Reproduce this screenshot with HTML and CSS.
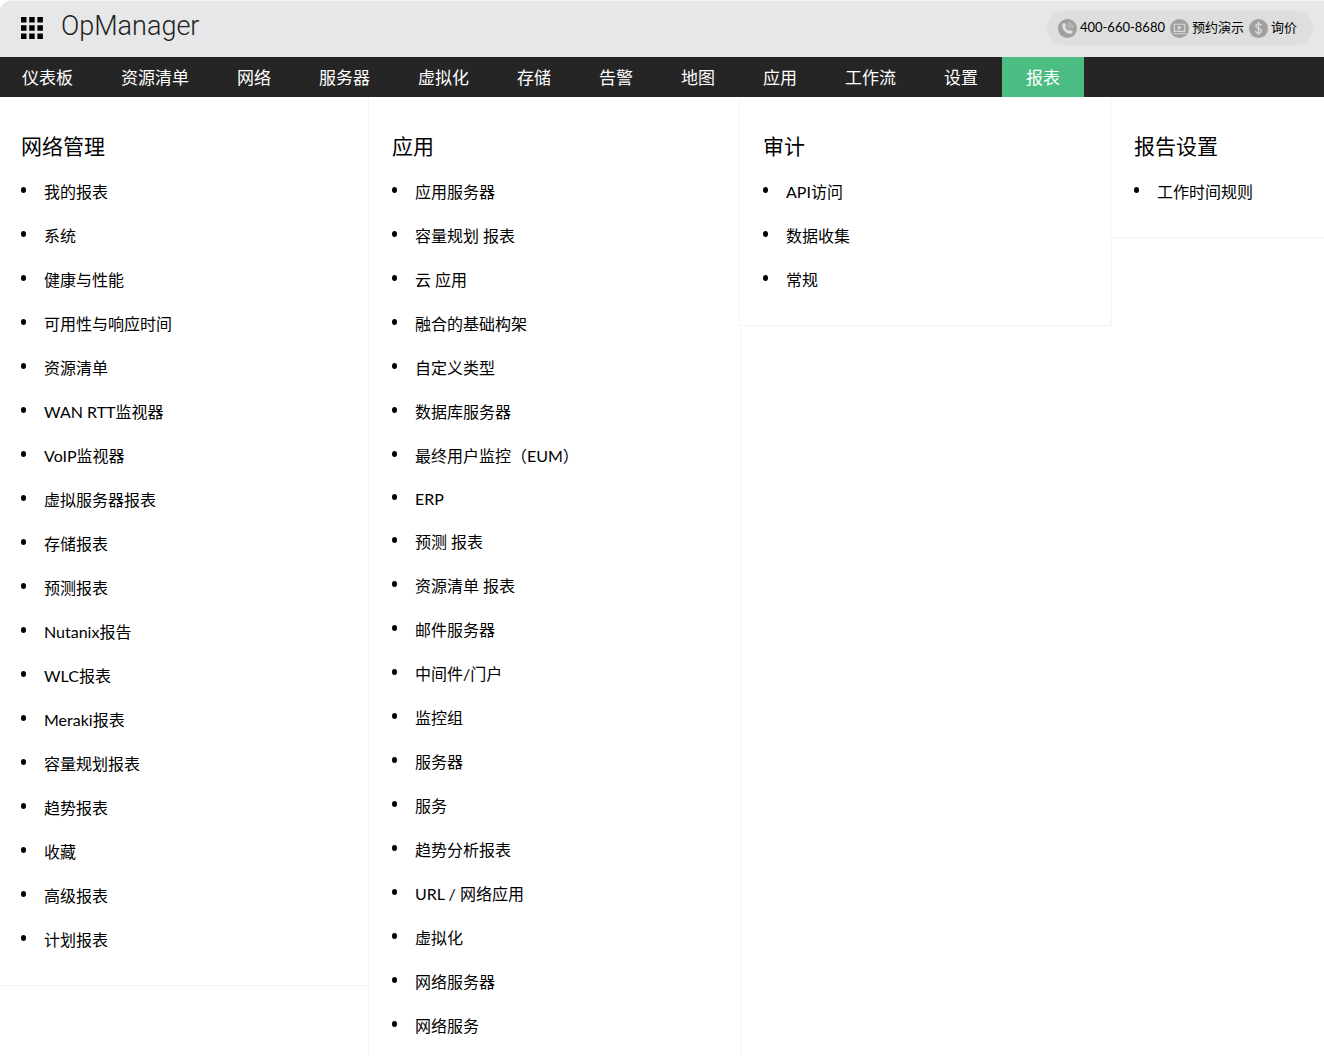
FILE: index.html
```html
<!DOCTYPE html>
<html lang="zh-CN">
<head>
  <meta charset="UTF-8">
  <title>OpManager</title>
  <meta name="viewport" content="width=device-width, initial-scale=1.0">
  <link rel="stylesheet" href="styles.css">
</head>
<body>
  <header class="topbar">
    <div class="brand">
      <button class="apps" aria-label="Apps">
        <svg width="22" height="22" viewBox="0 0 22 22">
          <path d="M0 0h5.500v5.500H0zM8.200 0h5.500v5.500H8.200zM16.400 0h5.500v5.500h-5.500zM0 8.200h5.500v5.500H0zM8.200 8.200h5.500v5.500H8.200zM16.400 8.200h5.500v5.500h-5.500zM0 16.400h5.500v5.500H0zM8.200 16.400h5.500v5.500H8.200zM16.400 16.400h5.500v5.500h-5.500z"/>
        </svg>
      </button>
      <a class="logo" href="#">OpManager</a>
    </div>
    <div class="contact">
      <a href="#">
        <svg width="19" height="19" viewBox="0 0 20 20">
          <circle cx="10" cy="10" r="10" fill="#a0a0a0"/>
          <path d="M4.500 5.200L6.600 4l2.200 2.800-1.200 1.400c.6 1.700 2 3.200 3.900 4.100l1.500-1.100 2.800 2.200-1.300 2C9.500 16.800 3 10.500 4.500 5.200z" fill="#dedede"/>
          <path d="M10.300 7.600a2 2 0 0 1 1.900 2M10.400 5.800a4 4 0 0 1 3.600 3.800M10.500 4a5.600 5.600 0 0 1 5.200 5.500" fill="none" stroke="#d0d0d0" stroke-width=".9"/>
        </svg>
        <span>400-660-8680</span>
      </a>
      <a href="#">
        <svg width="19" height="19" viewBox="0 0 20 20">
          <circle cx="10" cy="10" r="10" fill="#a0a0a0"/>
          <path d="M4.500 5.500h11v7.500h-11zM3.500 15.500h13" fill="none" stroke="#d8d8d8" stroke-width="1.200"/>
          <path d="M8.300 6.900l4 2.400-4 2.400z" fill="#dedede"/>
        </svg>
        <span>预约演示</span>
      </a>
      <a href="#">
        <svg width="19" height="19" viewBox="0 0 20 20">
          <circle cx="10" cy="10" r="10" fill="#a0a0a0"/>
          <path d="M13 7c-.3-1.300-1.400-1.900-3-1.900S7.200 5.900 7.200 7.300c0 3.200 5.800 1.800 5.800 5 0 1.600-1.300 2.400-3 2.400s-3-.8-3.200-2.200M10 3v14" fill="none" stroke="#dedede" stroke-width="1.400"/>
        </svg>
        <span>询价</span>
      </a>
    </div>
  </header>

  <nav class="menu">
    <a href="#">仪表板</a>
    <a href="#">资源清单</a>
    <a href="#">网络</a>
    <a href="#">服务器</a>
    <a href="#">虚拟化</a>
    <a href="#">存储</a>
    <a href="#">告警</a>
    <a href="#">地图</a>
    <a href="#">应用</a>
    <a href="#">工作流</a>
    <a href="#">设置</a>
    <a href="#" class="active">报表</a>
  </nav>

  <main class="columns">
    <section class="column">
      <h2>网络管理</h2>
      <ul>
        <li><a href="#">我的报表</a></li>
        <li><a href="#">系统</a></li>
        <li><a href="#">健康与性能</a></li>
        <li><a href="#">可用性与响应时间</a></li>
        <li><a href="#">资源清单</a></li>
        <li><a href="#">WAN RTT监视器</a></li>
        <li><a href="#">VoIP监视器</a></li>
        <li><a href="#">虚拟服务器报表</a></li>
        <li><a href="#">存储报表</a></li>
        <li><a href="#">预测报表</a></li>
        <li><a href="#">Nutanix报告</a></li>
        <li><a href="#">WLC报表</a></li>
        <li><a href="#">Meraki报表</a></li>
        <li><a href="#">容量规划报表</a></li>
        <li><a href="#">趋势报表</a></li>
        <li><a href="#">收藏</a></li>
        <li><a href="#">高级报表</a></li>
        <li><a href="#">计划报表</a></li>
      </ul>
    </section>

    <section class="column">
      <h2>应用</h2>
      <ul>
        <li><a href="#">应用服务器</a></li>
        <li><a href="#">容量规划 报表</a></li>
        <li><a href="#">云 应用</a></li>
        <li><a href="#">融合的基础构架</a></li>
        <li><a href="#">自定义类型</a></li>
        <li><a href="#">数据库服务器</a></li>
        <li><a href="#">最终用户监控（EUM）</a></li>
        <li class="latin"><a href="#">ERP</a></li>
        <li><a href="#">预测 报表</a></li>
        <li><a href="#">资源清单 报表</a></li>
        <li><a href="#">邮件服务器</a></li>
        <li><a href="#">中间件/门户</a></li>
        <li><a href="#">监控组</a></li>
        <li><a href="#">服务器</a></li>
        <li><a href="#">服务</a></li>
        <li><a href="#">趋势分析报表</a></li>
        <li><a href="#">URL / 网络应用</a></li>
        <li><a href="#">虚拟化</a></li>
        <li><a href="#">网络服务器</a></li>
        <li><a href="#">网络服务</a></li>
      </ul>
    </section>

    <section class="column">
      <h2>审计</h2>
      <ul>
        <li><a href="#">API访问</a></li>
        <li><a href="#">数据收集</a></li>
        <li><a href="#">常规</a></li>
      </ul>
    </section>

    <section class="column">
      <h2>报告设置</h2>
      <ul>
        <li><a href="#">工作时间规则</a></li>
      </ul>
    </section>
  </main>
</body>
</html>
```
FILE: styles.css
```css
* {
  box-sizing: border-box;
}
body {
  margin: 0;
  background: #fff;
  color: #000;
  font-family: Lato, "Noto Sans CJK SC", sans-serif;
  font-size: 16px;
  overflow: hidden;
}
a {
  color: inherit;
  text-decoration: none;
}

/* top bar */
.topbar {
  display: flex;
  justify-content: space-between;
  align-items: center;
  height: 57px;
  padding: 0 11px 2px 21px;
  background: #e6e7e8;
  border-top: 1px solid #f3f3f3;
  border-radius: 12px 0 0 0;
}
.brand {
  display: flex;
  align-items: center;
  gap: 18px;
}
.apps {
  display: flex;
  padding: 0;
  border: none;
  background: none;
  cursor: pointer;
}
.logo {
  font-family: "Roboto Slab", Roboto, sans-serif;
  font-size: 27px;
  font-weight: 300;
  line-height: 32px;
  padding-bottom: 4px;
  color: #222;
}
.contact {
  display: flex;
  align-items: center;
  gap: 5px;
  height: 34px;
  padding: 0 16px 0 11px;
  border-radius: 17px;
  background: #dedede;
  font-size: 13px;
}
.contact a {
  display: flex;
  align-items: center;
  gap: 3px;
}
.contact span {
  line-height: 18px;
  padding-bottom: 2px;
}

/* main menu */
.menu {
  display: flex;
  height: 40px;
  background: #252525;
  color: #fff;
  font-size: 17px;
  line-height: 42px;
}
.menu a {
  padding: 0 24px;
}
.menu a:first-child {
  padding-left: 22px;
}
.menu .active {
  background: #4bbd82;
}

/* report columns, borders of neighbours overlap */
.columns {
  display: grid;
  grid-template-columns: 368px 371px 371px 1fr;
  align-items: start;
}
.column {
  margin-right: -2px;
  padding: 33px 23px 23px;
  background: #fff;
  border: 1px solid #f3f3f3;
  border-top: none;
}
.column:first-child {
  padding-left: 21px;
  border-left: none;
}
.column h2 {
  margin: 0;
  font-size: 21px;
  font-weight: 400;
  line-height: 32px;
}
.column ul {
  margin: 8px 0 0;
  padding: 0;
  list-style: none;
}
.column li {
  display: flex;
  align-items: center;
  gap: 18px;
  line-height: 44px;
}
.column li::before {
  content: "";
  width: 5px;
  height: 6px;
  margin-bottom: 4px;
  border-radius: 50%;
  background: #000;
}
.column li.latin {
  line-height: 42px;
}
```
